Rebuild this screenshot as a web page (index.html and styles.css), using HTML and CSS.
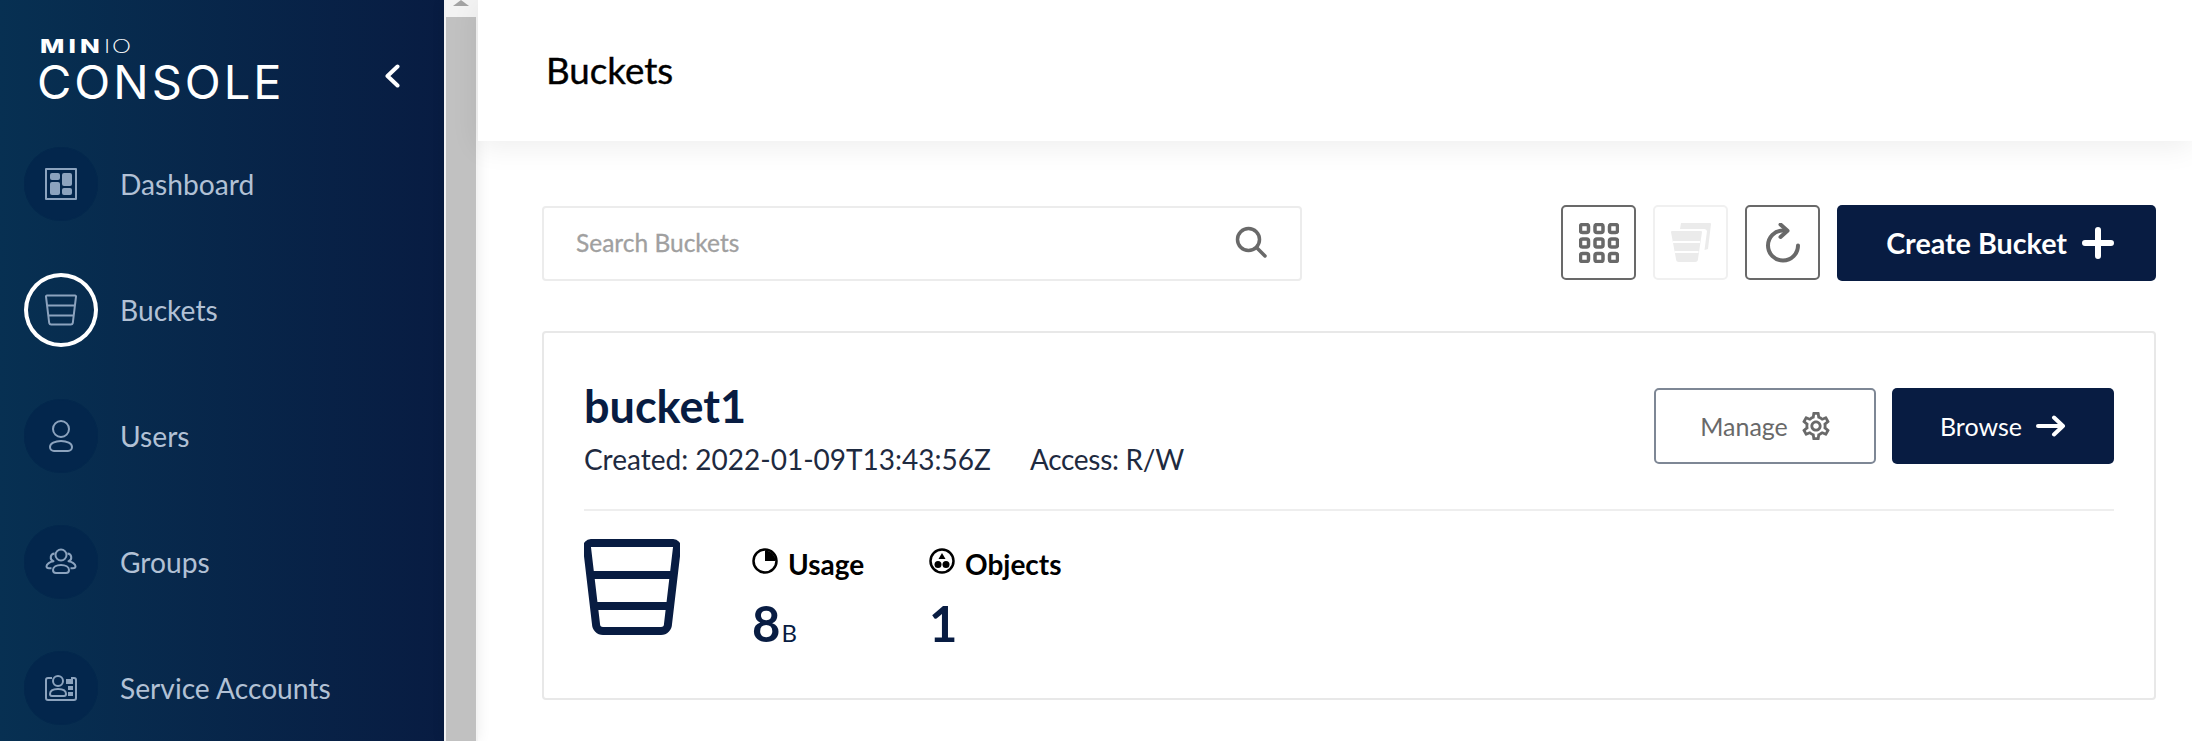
FILE: index.html
```html
<!DOCTYPE html>
<html lang="en">
<head>
<meta charset="utf-8">
<title>MinIO Console</title>
<link rel="stylesheet" href="styles.css">
</head>
<body>
<div class="app">
  <aside class="sidebar">
    <div class="brand">
      <div class="logo">
        <div class="logo-minio"><span class="logo-bold">MIN</span><span class="logo-thin">IO</span></div>
        <div class="logo-console">CONSOLE</div>
      </div>
      <svg class="collapse" viewBox="0 0 16 24"><path d="M13.5 2.5 3.5 12l10 9.5"/></svg>
    </div>
    <nav class="nav">
      <a class="nav-item"><span class="nav-icon"><svg viewBox="0 0 32 32"><rect x="1" y="1" width="30" height="30" class="ln"/><rect x="5" y="5" width="10" height="7" rx="2" class="fl"/><rect x="5" y="14" width="10" height="13" rx="2" class="fl"/><rect x="17" y="5" width="10" height="13" rx="2" class="fl"/><rect x="17" y="20" width="10" height="7" rx="2" class="fl"/></svg></span><span>Dashboard</span></a>
      <a class="nav-item active"><span class="nav-icon"><svg viewBox="0 0 32 32"><path class="ln" d="M2 1.500h28a1 1 0 0 1 1 1.200L27.800 29a2 2 0 0 1-2 1.500H6.200a2 2 0 0 1-2-1.500L1 2.700a1 1 0 0 1 1-1.200ZM2.300 11.500h27.400M3.800 21.500h24.400"/></svg></span><span>Buckets</span></a>
      <a class="nav-item"><span class="nav-icon"><svg viewBox="0 0 32 32"><circle class="ln" cx="16" cy="9" r="8"/><path class="ln" d="M9 31h14a4 4 0 0 0 4-4c0-3.500-5-6-11-6S5 23.500 5 27a4 4 0 0 0 4 4Z"/></svg></span><span>Users</span></a>
      <a class="nav-item"><span class="nav-icon"><svg viewBox="0 0 32 32"><circle class="ln" cx="16" cy="9" r="5.500"/><path class="ln" d="M11 27h10a3 3 0 0 0 3-3c0-3-3.500-5-8-5s-8 2-8 5a3 3 0 0 0 3 3ZM9.500 7.500a4 4 0 0 0-1 7.800c-3.500.5-7 2.700-7 5 0 1.200 1 2 2.500 2h2.500M22.500 7.500a4 4 0 0 1 1 7.800c3.500.5 7 2.700 7 5 0 1.200-1 2-2.500 2h-2.500"/></svg></span><span>Groups</span></a>
      <a class="nav-item"><span class="nav-icon"><svg viewBox="0 0 32 32"><path class="ln" d="M7 6H3a2 2 0 0 0-2 2v18a2 2 0 0 0 2 2h26a2 2 0 0 0 2-2V8a2 2 0 0 0-2-2h-3"/><circle class="ln" cx="13" cy="9" r="5"/><path class="ln" d="M7 24h12a2 2 0 0 0 2-2c0-3-3-5-8-5s-8 2-8 5a2 2 0 0 0 2 2Z"/><rect class="fl" x="21" y="7" width="7" height="5"/><rect class="fl" x="23" y="14" width="5" height="4"/><rect class="fl" x="23" y="20" width="5" height="4"/></svg></span><span>Service Accounts</span></a>
    </nav>
  </aside>
  <div class="scrollbar"><div class="scroll-up"><span class="scroll-arrow"></span></div><div class="scroll-thumb"></div></div>
  <main class="main">
    <header class="page-header"><h1 class="page-title">Buckets</h1></header>
    <section class="content">
      <div class="toolbar">
        <div class="search">
          <span class="search-text">Search Buckets</span>
          <svg class="search-icon" viewBox="0 0 32 32"><circle cx="13.500" cy="13.500" r="11"/><path d="m22 22 8 8"/></svg>
        </div>
        <div class="actions">
          <button class="icon-btn"><svg class="icon-40" viewBox="0 0 40 40"><g class="grid-cells"><rect x="1.500" y="1.500" width="8" height="8" rx="2"/><rect x="16" y="1.500" width="8" height="8" rx="2"/><rect x="30.500" y="1.500" width="8" height="8" rx="2"/><rect x="1.500" y="16" width="8" height="8" rx="2"/><rect x="16" y="16" width="8" height="8" rx="2"/><rect x="30.500" y="16" width="8" height="8" rx="2"/><rect x="1.500" y="30.500" width="8" height="8" rx="2"/><rect x="16" y="30.500" width="8" height="8" rx="2"/><rect x="30.500" y="30.500" width="8" height="8" rx="2"/></g></svg></button>
          <button class="icon-btn disabled"><svg class="icon-40" viewBox="0 0 40 40"><path class="multi" d="M10 0h29a1 1 0 0 1 1 1l-3 25-3.500 1 2.500-19a3 3 0 0 0-3-2H9Z"/><path class="multi" d="M1 8h29a1 1 0 0 1 1 1l-4 27a3 3 0 0 1-3 3H8a3 3 0 0 1-3-3L0 9a1 1 0 0 1 1-1Z"/><path class="multi-gap" d="M2 19h27M3.500 29h24"/></svg></button>
          <button class="icon-btn"><svg class="icon-40" viewBox="0 0 40 40"><path class="refresh" d="M35 22.500A15 15 0 1 1 20 7.500"/><path class="refresh" d="M17.500 1.500l7 6.200-7 6.300"/></svg></button>
          <button class="primary create"><span>Create Bucket</span><svg class="plus" viewBox="0 0 32 32"><path d="M16 3v26M3 16h26"/></svg></button>
        </div>
      </div>
      <article class="card">
        <div class="card-top">
          <div>
            <h2 class="bucket-name">bucket1</h2>
            <p class="bucket-meta"><span>Created: 2022-01-09T13:43:56Z</span><span class="meta-access">Access: R/W</span></p>
          </div>
          <div class="card-actions">
            <button class="outline"><span>Manage</span><svg class="gear" viewBox="2 2 20 20"><path d="M19.430 12.980c.04-.32.07-.64.07-.98 0-.34-.03-.66-.07-.98l2.110-1.650c.19-.15.24-.42.12-.64l-2-3.460c-.09-.16-.26-.25-.44-.25-.06 0-.12.01-.17.03l-2.490 1c-.52-.4-1.080-.73-1.690-.98l-.38-2.650C14.460 2.180 14.250 2 14 2h-4c-.25 0-.46.18-.49.42l-.38 2.650c-.61.25-1.170.59-1.690.98l-2.490-1c-.06-.02-.12-.03-.18-.03-.17 0-.34.09-.43.25l-2 3.460c-.13.22-.07.49.12.64l2.110 1.650c-.04.32-.07.65-.07.98 0 .33.03.66.07.98l-2.110 1.650c-.19.15-.24.42-.12.64l2 3.460c.09.16.26.25.44.25.06 0 .12-.01.17-.03l2.490-1c.52.4 1.080.73 1.690.98l.38 2.650c.03.24.24.42.49.42h4c.25 0 .46-.18.49-.42l.38-2.650c.61-.25 1.170-.59 1.690-.98l2.490 1c.06.02.12.03.18.03.17 0 .34-.09.43-.25l2-3.460c.12-.22.07-.49-.12-.64l-2.110-1.650zm-1.980-1.710c.04.31.05.52.05.73 0 .21-.02.43-.05.73l-.14 1.130.89.7 1.080.84-.7 1.210-1.270-.51-1.040-.42-.9.68c-.43.32-.84.56-1.250.73l-1.060.43-.16 1.130-.2 1.350h-1.400l-.19-1.350-.16-1.130-1.060-.43c-.43-.18-.83-.41-1.230-.71l-.91-.7-1.060.43-1.270.51-.7-1.210 1.080-.84.89-.7-.14-1.130c-.03-.31-.05-.54-.05-.74s.02-.43.05-.73l.14-1.130-.89-.7-1.080-.84.7-1.210 1.270.51 1.040.42.9-.68c.43-.32.84-.56 1.250-.73l1.060-.43.16-1.130.2-1.350h1.390l.19 1.350.16 1.130 1.060.43c.43.18.83.41 1.230.71l.91.7 1.060-.43 1.270-.51.7 1.210-1.070.85-.89.7.14 1.130zM12 8c-2.210 0-4 1.790-4 4s1.790 4 4 4 4-1.790 4-4-1.790-4-4-4zm0 6c-1.100 0-2-.9-2-2s.9-2 2-2 2 .9 2 2-.9 2-2 2z"/></svg></button>
            <button class="primary browse"><span>Browse</span><svg class="arrow" viewBox="0 0 30 22"><path d="M2 11h25M18 2.500l9 8.500-9 8.500"/></svg></button>
          </div>
        </div>
        <div class="card-stats">
          <svg class="bucket-big" viewBox="0 0 96 96"><path d="M7 4h82a4 4 0 0 1 4 4.500L84 85a7 7 0 0 1-7 7H19a7 7 0 0 1-7-7L3 8.500A4 4 0 0 1 7 4ZM7 36h82M11 67h74"/></svg>
          <div class="stat stat-usage">
            <div class="stat-label"><svg class="stat-icon" viewBox="0 0 26 26"><circle class="o" cx="13" cy="13" r="11.500"/><path class="s" d="M13 2.500A10.500 10.500 0 0 1 23.500 13H13Z"/></svg><span class="stat-text">Usage</span></div>
            <div class="stat-value">8<span class="stat-unit">B</span></div>
          </div>
          <div class="stat">
            <div class="stat-label"><svg class="stat-icon" viewBox="0 0 26 26"><circle class="o" cx="13" cy="13" r="11.500"/><path class="s" d="M13 5l3.500 6h-7Z"/><circle class="s" cx="9" cy="16.500" r="3.500"/><circle class="s" cx="17" cy="16.500" r="3.500"/></svg><span class="stat-text">Objects</span></div>
            <div class="stat-value">1</div>
          </div>
        </div>
      </article>
    </section>
  </main>
</div>
</body>
</html>
```
FILE: styles.css
```css
* { box-sizing: border-box; }
html, body { margin: 0; height: 100%; overflow: hidden; background: #fff; }
body { font-family: Lato, "Liberation Sans", sans-serif; color: #081c42; }
button { font-family: inherit; cursor: pointer; }

.app { display: flex; height: 741px; }

.sidebar {
  width: 444px;
  flex: none;
  background: linear-gradient(90deg, #073052 0%, #081c42 100%);
  color: #fff;
}
.brand { display: flex; justify-content: space-between; align-items: flex-start; height: 147px; padding: 40px 44px 0 37px; }
.logo { display: flex; flex-direction: column; }
.logo-minio { height: 22px; margin-left: 3px; font-family: Inter, sans-serif; font-size: 19px; line-height: 14px; transform: scaleX(1.36); transform-origin: left; white-space: nowrap; }
.logo-bold { font-weight: 800; letter-spacing: 3px; }
.logo-thin { font-weight: 200; letter-spacing: 1px; }
.logo-console { font-family: Inter, sans-serif; font-weight: 400; font-size: 47px; line-height: 40px; letter-spacing: 3px; }
.collapse { width: 16px; height: 24px; margin-top: 24px; fill: none; stroke: #fff; stroke-width: 4; stroke-linecap: round; stroke-linejoin: round; }

.nav { display: flex; flex-direction: column; gap: 52px; padding-left: 24px; }
.nav-item { display: flex; align-items: center; gap: 22px; height: 74px; font-size: 28.200px; color: #b2c1d5; }
.nav-icon { width: 74px; height: 74px; flex: none; display: flex; align-items: center; justify-content: center; border-radius: 50%; background: #03264c; box-shadow: inset 0 0 0 1px #04284d; }
.active .nav-icon { background: transparent; box-shadow: inset 0 0 0 4px #fff; }
.nav-icon svg { width: 32px; height: 32px; }
.ln { fill: none; stroke: #8ca3be; stroke-width: 2; stroke-linejoin: round; }
.fl { fill: #8ca3be; }

.scrollbar { width: 34px; flex: none; padding: 0 2px; background: #f3f3f3; display: flex; flex-direction: column; box-shadow: 0 0 14px rgba(0, 0, 0, .08); }
.scroll-up { height: 17px; display: flex; justify-content: center; }
.scroll-arrow { width: 0; height: 0; border-left: 8px solid transparent; border-right: 8px solid transparent; border-bottom: 6px solid #a3a3a3; }
.scroll-thumb { flex: 1; background: #c1c1c1; }

.main { flex: 1; min-width: 0; display: flex; flex-direction: column; position: relative; }
.page-header { height: 141px; display: flex; align-items: center; padding: 0 0 2px 68px; background: #fff; box-shadow: 0 6px 28px rgba(0, 0, 0, .07); }
.page-title { margin: 0; font-size: 36.700px; font-weight: 400; -webkit-text-stroke: .4px #000; color: #000; }

.content { padding: 64px 36px 0 64px; }
.toolbar { display: flex; justify-content: space-between; align-items: center; }
.search { width: 760px; height: 75px; display: flex; align-items: center; justify-content: space-between; padding: 0 33px 2px 32px; border: 2px solid #ececec; border-radius: 4px; }
.search-text { font-size: 24.500px; -webkit-text-stroke: .3px #a0a0a0; color: #a0a0a0; }
.search-icon { width: 32px; height: 32px; fill: none; stroke: #696969; stroke-width: 3.500; stroke-linecap: round; }

.actions { display: flex; gap: 17px; }
.icon-btn { width: 75px; height: 75px; padding: 0; display: flex; align-items: center; justify-content: center; background: #fff; border: 2px solid #696969; border-radius: 5px; }
.icon-btn.disabled { border-color: #f0f0f0; }
.icon-40 { width: 40px; height: 40px; }
.grid-cells { fill: none; stroke: #696969; stroke-width: 3.500; }
.multi { fill: #ebebeb; }
.multi-gap { fill: none; stroke: #fff; stroke-width: 2; }
.refresh { fill: none; stroke: #696969; stroke-width: 4; stroke-linecap: round; stroke-linejoin: round; }

.primary { display: flex; align-items: center; justify-content: center; color: #fff; background: #081c42; border: 0; border-radius: 5px; }
.create { width: 319px; height: 76px; gap: 15px; padding: 0 42px 0 0; justify-content: flex-end; font-size: 28.700px; font-weight: 700; }
.plus { width: 32px; height: 32px; fill: none; stroke: #fff; stroke-width: 6; stroke-linecap: round; }

.card { height: 369px; margin-top: 50px; padding: 55px 40px 0; border: 2px solid #e8e8e8; border-radius: 4px; }
.card-top { display: flex; justify-content: space-between; height: 123px; border-bottom: 2px solid #eeeeee; }
.bucket-name { margin: -4px 0 0; font-size: 45px; line-height: 44px; font-weight: 700; color: #081c42; }
.bucket-meta { display: flex; gap: 39px; margin: 13px 0 0; font-size: 28px; line-height: 36px; color: #1e2a40; }
.meta-access { letter-spacing: -.300px; }
.card-actions { display: flex; gap: 16px; }
.outline, .browse { width: 222px; height: 76px; display: flex; align-items: center; justify-content: center; font-size: 25px; }
.outline { gap: 14px; background: #fff; color: #696969; border: 2px solid #7e8795; border-radius: 5px; }
.browse { gap: 14px; }
.gear { width: 28px; height: 28px; fill: #696969; }
.arrow { width: 30px; height: 22px; fill: none; stroke: #fff; stroke-width: 4; stroke-linecap: round; stroke-linejoin: round; }

.card-stats { display: flex; align-items: flex-start; padding-top: 28px; }
.bucket-big { width: 96px; height: 96px; flex: none; margin-right: 72px; fill: none; stroke: #081c42; stroke-width: 8; stroke-linejoin: round; }
.stat-usage { width: 177px; }
.stat-label { display: flex; align-items: flex-start; gap: 10px; margin-top: 9px; font-size: 28px; font-weight: 700; line-height: 26px; color: #000; }
.stat-text { margin-top: 3px; }
.stat-icon { width: 26px; height: 26px; flex: none; }
.stat-icon .o { fill: none; stroke: #000; stroke-width: 2.500; }
.stat-icon .s { fill: #000; }
.stat-value { margin-top: 18px; font-size: 49px; line-height: 56px; font-weight: 700; color: #081c42; }
.stat-unit { margin-left: 1px; font-size: 24px; font-weight: 400; }
```
